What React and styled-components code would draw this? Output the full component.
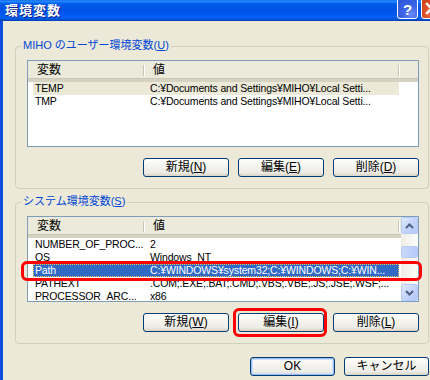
import React from "react";
import styled, { createGlobalStyle } from "styled-components";

const GlobalStyle = createGlobalStyle`
  html, body {
    margin: 0;
    padding: 0;
    overflow: hidden;
    background: #ece9d8;
  }
  body {
    font-family: "Liberation Sans", "Noto Sans CJK JP", sans-serif;
    font-size: 12px;
  }
`;

const userVars = [
  { name: "TEMP", value: "C:¥Documents and Settings¥MIHO¥Local Setti...", sel: "dim" },
  { name: "TMP", value: "C:¥Documents and Settings¥MIHO¥Local Setti..." },
];

const systemVars = [
  { name: "NUMBER_OF_PROC...", value: "2" },
  { name: "OS", value: "Windows_NT" },
  { name: "Path", value: "C:¥WINDOWS¥system32;C:¥WINDOWS;C:¥WIN...", sel: "focus" },
  { name: "PATHEXT", value: ".COM;.EXE;.BAT;.CMD;.VBS;.VBE;.JS;.JSE;.WSF;..." },
  { name: "PROCESSOR_ARC...", value: "x86" },
];

export default function App() {
  return (
    <>
      <GlobalStyle />
      <Window>
        <TitleBar>
          <Title>環境変数</Title>
          <Caption>
            <HelpButton>?</HelpButton>
            <CloseButton>
              <svg width="13" height="13" viewBox="0 0 13 13">
                <path d="M2 2 L11 11 M11 2 L2 11" stroke="#fff" strokeWidth="2.4" strokeLinecap="square" />
              </svg>
            </CloseButton>
          </Caption>
        </TitleBar>

        <Body>
          <Group>
            <Legend>MIHO のユーザー環境変数(<u>U</u>)</Legend>
            <ListView $height={87}>
              <ListMain>
                <Header>
                  <HeaderCell $w={116}>変数</HeaderCell>
                  <HeaderCell $w={255}>値</HeaderCell>
                  <HeaderFill />
                </Header>
                {userVars.map((v) => (
                  <Row key={v.name} $sel={v.sel}>
                    <Cell $w={115}>{v.name}</Cell>
                    <Cell $w={251}>{v.value}</Cell>
                  </Row>
                ))}
              </ListMain>
            </ListView>
            <ButtonRow>
              <Button>新規(<u>N</u>)</Button>
              <Button>編集(<u>E</u>)</Button>
              <Button>削除(<u>D</u>)</Button>
            </ButtonRow>
          </Group>

          <Group $second>
            <Legend>システム環境変数(<u>S</u>)</Legend>
            <ListView $height={86}>
              <ListMain>
                <Header>
                  <HeaderCell $w={116}>変数</HeaderCell>
                  <HeaderCell $w={255}>値</HeaderCell>
                </Header>
                {systemVars.map((v) => (
                  <Row key={v.name} $sel={v.sel}>
                    <Cell $w={115}>{v.name}</Cell>
                    <Cell $w={251}>{v.value}</Cell>
                  </Row>
                ))}
              </ListMain>
              <ScrollBar>
                <ScrollButton>
                  <svg width="9" height="6" viewBox="0 0 9 6">
                    <path d="M1 5 L4.5 1.5 L8 5" fill="none" stroke="#4d6185" strokeWidth="2" />
                  </svg>
                </ScrollButton>
                <Track>
                  <Thumb />
                </Track>
                <ScrollButton>
                  <svg width="9" height="6" viewBox="0 0 9 6">
                    <path d="M1 1 L4.5 4.5 L8 1" fill="none" stroke="#4d6185" strokeWidth="2" />
                  </svg>
                </ScrollButton>
              </ScrollBar>
            </ListView>
            <ButtonRow>
              <Button>新規(<u>W</u>)</Button>
              <Button>編集(<u>I</u>)</Button>
              <Button>削除(<u>L</u>)</Button>
            </ButtonRow>
          </Group>

          <DialogButtons>
            <Button $default $w={85}>OK</Button>
            <Button $w={85}>キャンセル</Button>
          </DialogButtons>
        </Body>

        {/* red annotation marks drawn over the dialog */}
        <Mark style={{ left: 21, top: 261, width: 401, height: 20 }} />
        <Mark style={{ left: 233, top: 308, width: 94, height: 29 }} />
      </Window>
    </>
  );
}

const Window = styled.div`
  position: relative;
  width: 430px;
  height: 380px;
  overflow: hidden;
  display: flex;
  flex-direction: column;
  background: #ece9d8;
`;

const TitleBar = styled.div`
  height: 21px;
  flex-shrink: 0;
  display: flex;
  align-items: flex-start;
  justify-content: space-between;
  background: linear-gradient(
    #0058ee 0%,
    #3593ff 5%,
    #127dff 10%,
    #0262ee 16%,
    #0057e5 24%,
    #0054e3 40%,
    #0055eb 60%,
    #005bf5 72%,
    #0262f5 84%,
    #0052d6 92%,
    #003ca8 100%
  );
`;

const Title = styled.span`
  color: #fff;
  font-weight: bold;
  font-size: 13px;
  line-height: 13px;
  margin: 4px 0 0 5px;
  letter-spacing: 1px;
  text-shadow: 1px 1px 0 #0a1e8c;
`;

const Caption = styled.div`
  display: flex;
  gap: 3px;
  margin: -2px -12px 0 0;
`;

const CaptionButton = styled.div`
  width: 19px;
  height: 19px;
  border: 1px solid #fff;
  border-radius: 3px;
  display: flex;
  align-items: center;
  justify-content: center;
`;

const HelpButton = styled(CaptionButton)`
  background: radial-gradient(circle at 70% 80%, #6a8ef7 0%, #3c66e8 40%, #2a52d8 100%);
  color: #fff;
  font-weight: bold;
  font-size: 15px;
  line-height: 15px;
  padding-top: 2px;
  box-sizing: content-box;
  height: 17px;
`;

const CloseButton = styled(CaptionButton)`
  background: radial-gradient(circle at 70% 80%, #f08a6a 0%, #e25a30 40%, #c83c16 100%);
`;

const Body = styled.div`
  flex: 1;
  display: flex;
  flex-direction: column;
  border-left: 3px solid #0b4ee0;
  padding: 0 1px 0 12px;
`;

const Group = styled.fieldset`
  margin: ${(p) => (p.$second ? "5px" : "17px")} 0 0 0;
  padding: 6px 9px 11px 11px;
  border: 1px solid #d0d0bf;
  border-radius: 4px;
  min-width: 0;
`;

const Legend = styled.legend`
  margin-left: -6px;
  padding: 0 2px 2px 2px;
  color: #0046d5;
  font-size: 11px;
  line-height: 14px;
  & u {
    text-underline-offset: 1px;
  }
`;

const ListView = styled.div`
  height: ${(p) => p.$height}px;
  box-sizing: border-box;
  border: 1px solid #7f9db9;
  background: #fff;
  display: flex;
  overflow: hidden;
`;

const ListMain = styled.div`
  flex: 1;
  min-width: 0;
  display: flex;
  flex-direction: column;
`;

const Header = styled.div`
  height: 21px;
  flex-shrink: 0;
  box-sizing: border-box;
  display: flex;
  background: #ebeadb;
  border-bottom: 3px solid #d6d2c2;
  box-shadow: inset 0 -1px 0 #cbc7b8;
`;

const HeaderCell = styled.div`
  position: relative;
  width: ${(p) => p.$w}px;
  flex-shrink: 0;
  box-sizing: border-box;
  padding-left: 9px;
  font-size: 12px;
  line-height: 18px;
  &::after {
    content: "";
    position: absolute;
    right: 0;
    top: 4px;
    bottom: 3px;
    width: 1px;
    background: #c7c5b2;
    box-shadow: 1px 0 0 #fff;
  }
`;

const HeaderFill = styled.div`
  flex: 1;
`;

const Row = styled.div`
  display: flex;
  flex-shrink: 0;
  width: 366px;
  height: 13px;
  margin-left: 5px;
  font-size: 10.5px;
  letter-spacing: -0.15px;
  line-height: 13px;
  background: ${(p) =>
    p.$sel === "focus" ? "#316ac5" : p.$sel === "dim" ? "#ece9d8" : "transparent"};
  color: ${(p) => (p.$sel === "focus" ? "#fff" : "#000")};
  outline: ${(p) => (p.$sel === "focus" ? "1px dotted #f0c860" : "none")};
  outline-offset: -1px;
`;

const Cell = styled.div`
  width: ${(p) => p.$w}px;
  flex-shrink: 0;
  box-sizing: border-box;
  padding-left: 2px;
  white-space: nowrap;
  overflow: hidden;
`;

const ScrollBar = styled.div`
  width: 17px;
  flex-shrink: 0;
  display: flex;
  flex-direction: column;
  background: #f7f6f1;
`;

const ScrollButton = styled.div`
  width: 17px;
  height: 17px;
  box-sizing: border-box;
  border: 1px solid #b7caf5;
  border-radius: 2px;
  background: linear-gradient(135deg, #e1eafe 0%, #c4d5fc 50%, #b4c8f6 100%);
  display: flex;
  align-items: center;
  justify-content: center;
`;

const Track = styled.div`
  flex: 1;
  background: linear-gradient(90deg, #eeede5, #fdfdfa);
  padding-top: 12px;
`;

const Thumb = styled.div`
  height: 10px;
  border: 1px solid #b7caf5;
  border-radius: 2px;
  background: linear-gradient(90deg, #c9d8fc, #b7cbf9);
`;

const ButtonRow = styled.div`
  display: flex;
  justify-content: flex-end;
  gap: 9px;
  margin-top: 11px;
`;

const Button = styled.div`
  width: ${(p) => p.$w || 86}px;
  height: 19px;
  box-sizing: border-box;
  border: 1px solid #003c74;
  border-radius: 3px;
  background: linear-gradient(#ffffff 0%, #f5f4ef 40%, #ecebe5 80%, #d8d2c2 100%);
  box-shadow: ${(p) => (p.$default ? "inset 0 0 0 1px #9ebcf0, inset 0 0 0 2px #cee1fb" : "none")};
  display: flex;
  align-items: center;
  justify-content: center;
  font-size: 12px;
  line-height: 17px;
  color: #000;
  & u {
    text-underline-offset: 1px;
  }
`;

const DialogButtons = styled.div`
  display: flex;
  justify-content: flex-end;
  gap: 9px;
  margin-top: 13px;
`;

const Mark = styled.div`
  position: absolute;
  box-sizing: border-box;
  border: 3px solid #f00;
  border-radius: 6px;
  pointer-events: none;
`;
